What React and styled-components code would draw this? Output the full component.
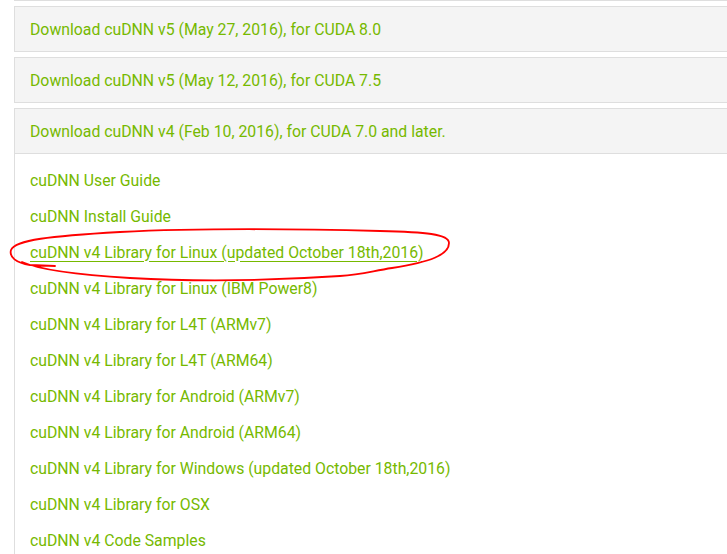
import React from "react";
import styled, { createGlobalStyle } from "styled-components";

const GlobalStyle = createGlobalStyle`
  html, body {
    margin: 0;
    padding: 0;
    background: #ffffff;
    overflow: hidden;
  }
  body {
    font-family: Roboto, "Liberation Sans", sans-serif;
  }
`;

const Page = styled.div`
  position: relative;
  width: 727px;
  height: 554px;
  padding-left: 14px;
  box-sizing: border-box;
  overflow: hidden;
`;

const Accordion = styled.div`
  width: 760px;
  margin-top: -45px;
  display: flex;
  flex-direction: column;
  gap: 5px;
`;

const Panel = styled.div`
  border: 1px solid #dedede;
  background: #ffffff;
`;

const Heading = styled.div`
  height: 44px;
  display: flex;
  align-items: center;
  padding-left: 15px;
  background: #f4f4f4;
  border-bottom: ${(p) => (p.$open ? "1px solid #dedede" : "none")};
`;

const Link = styled.a`
  color: #76b900;
  font-size: 15.8px;
  text-decoration: ${(p) => (p.$underline ? "underline" : "none")};
  text-underline-offset: 3px;
  cursor: pointer;
`;

const Body = styled.ul`
  list-style: none;
  margin: 0;
  padding: 8px 0 0 15px;
`;

const Item = styled.li`
  height: 36px;
  display: flex;
  align-items: center;
`;

const Mark = styled.svg`
  position: absolute;
  left: 0;
  top: 0;
  pointer-events: none;
`;

const panels = [
  { title: "" },
  { title: "Download cuDNN v5 (May 27, 2016), for CUDA 8.0" },
  { title: "Download cuDNN v5 (May 12, 2016), for CUDA 7.5" },
  {
    title: "Download cuDNN v4 (Feb 10, 2016), for CUDA 7.0 and later.",
    open: true,
    items: [
      "cuDNN User Guide",
      "cuDNN Install Guide",
      "cuDNN v4 Library for Linux (updated October 18th,2016)",
      "cuDNN v4 Library for Linux (IBM Power8)",
      "cuDNN v4 Library for L4T (ARMv7)",
      "cuDNN v4 Library for L4T (ARM64)",
      "cuDNN v4 Library for Android (ARMv7)",
      "cuDNN v4 Library for Android (ARM64)",
      "cuDNN v4 Library for Windows (updated October 18th,2016)",
      "cuDNN v4 Library for OSX",
      "cuDNN v4 Code Samples",
    ],
  },
];

export default function App() {
  return (
    <Page>
      <GlobalStyle />
      <Accordion>
        {panels.map((p, n) => (
          <Panel key={n}>
            <Heading $open={p.open}>
              {p.title && <Link>{p.title}</Link>}
            </Heading>
            {p.open && (
              <Body>
                {p.items.map((it, i) => (
                  <Item key={it}>
                    <Link $underline={i === 2}>{it}</Link>
                  </Item>
                ))}
              </Body>
            )}
          </Panel>
        ))}
      </Accordion>
      <Mark width="727" height="554" viewBox="0 0 727 554">
        <path
          d="M55 266 L30 265 C16 263 9 257 11 250 C15 240 50 236 120 232 C200 228 300 229 380 231 C425 232 449 234 449 243 C449 255 430 262 392 268 C372 271 362 275 340 276 C280 280 200 282 130 278 C80 275 40 270 22 262"
          fill="none"
          stroke="#ff0000"
          strokeWidth="1.8"
          strokeLinecap="round"
          strokeLinejoin="round"
        />
      </Mark>
    </Page>
  );
}
